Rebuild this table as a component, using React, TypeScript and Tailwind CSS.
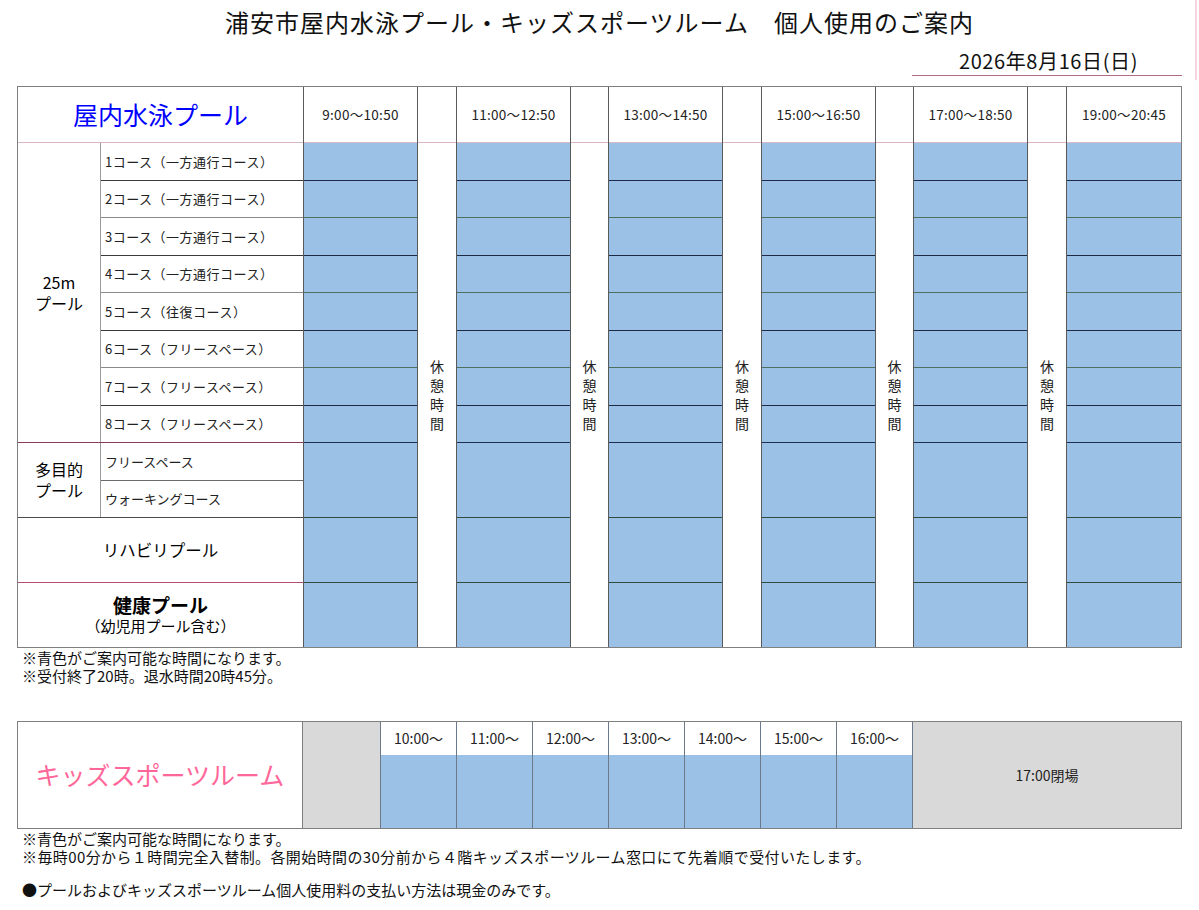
import React from "react";

const FONT = { fontFamily: '"Noto Sans CJK JP", "Noto Sans", sans-serif' };

const slots = ["9:00～10:50", "11:00～12:50", "13:00～14:50", "15:00～16:50", "17:00～18:50", "19:00～20:45"];

const courses = [
  "1コース（一方通行コース）",
  "2コース（一方通行コース）",
  "3コース（一方通行コース）",
  "4コース（一方通行コース）",
  "5コース（往復コース）",
  "6コース（フリースペース）",
  "7コース（フリースペース）",
  "8コース（フリースペース）",
];

const kidsSlots = ["10:00～", "11:00～", "12:00～", "13:00～", "14:00～", "15:00～", "16:00～"];

function SlotColumn({ label, last }: { label: string; last?: boolean }) {
  return (
    <div className={`flex w-[115px] flex-col border-l border-[#5a5a5a] ${last ? "" : "border-r"}`}>
      <div className="flex h-[56px] items-center justify-center border-b border-[#d8b8c4] bg-white text-[13.5px] tracking-[0.3px] text-[#222]">
        {label}
      </div>
      {courses.map((c, i) => (
        <div
          key={c}
          className={`h-[37.5px] bg-[#9bc2e6] ${i === 7 ? "border-b border-[#1f2f4f]" : i % 2 === 0 ? "border-b border-[#1f2a44]" : "border-b border-[#4f7060]"}`}
        />
      ))}
      <div className="h-[75px] border-b border-[#2f4a3f] bg-[#9bc2e6]" />
      <div className="h-[65px] border-b border-[#2f4a3f] bg-[#9bc2e6]" />
      <div className="h-[64px] bg-[#9bc2e6]" />
    </div>
  );
}

function BreakColumn({ w }: { w: string }) {
  return (
    <div className={`flex flex-col ${w}`}>
      <div className="h-[56px] border-b border-[#d8b8c4]" />
      <div className="flex flex-1 flex-col items-center justify-center text-[14px] leading-[19px] text-[#222]">
        <span>休</span>
        <span>憩</span>
        <span>時</span>
        <span>間</span>
      </div>
    </div>
  );
}

export default function App() {
  return (
    <div className="relative h-[910px] w-[1199px] bg-white text-black" style={FONT}>
      <div className="absolute right-[2px] top-0 h-[80px] w-[2px] bg-[#f3d6df]" />
      <div className="pt-[6px] text-center text-[24px] leading-[32px] tracking-[1px] text-[#111]">
        浦安市屋内水泳プール・キッズスポーツルーム　個人使用のご案内
      </div>
      <div className="flex justify-end pr-[17px] pt-[10px]">
        <div className="w-[270px] border-b border-[#b06a86] pb-[1px] pr-[44px] text-right text-[20px] leading-[26px] tracking-[0.6px] text-[#111]">
          2026年8月16日(日)
        </div>
      </div>

      {/* Pool table */}
      <div className="ml-[17px] mt-[10px] flex w-[1165px] border border-[#7f7f7f]">
        <div className="flex w-[285px] flex-col">
          <div className="flex h-[56px] items-center justify-center border-b border-[#d8b8c4] text-[25px] text-[#0000ff]">
            屋内水泳プール
          </div>
          <div className="flex h-[300px] border-b border-[#8a3c5c]">
            <div className="flex w-[83px] flex-col items-center justify-center border-r border-[#9a9a9a] text-[16px] leading-[21px]">
              <span>25m</span>
              <span>プール</span>
            </div>
            <div className="flex flex-1 flex-col">
              {courses.map((c, i) => (
                <div
                  key={c}
                  className={`flex flex-1 items-center pl-[4px] text-[13px] tracking-[0.5px] text-[#222] ${i < 7 ? (i % 2 === 0 ? "border-b border-[#3a3a3a]" : "border-b border-[#8a8a8a]") : ""}`}
                >
                  {c}
                </div>
              ))}
            </div>
          </div>
          <div className="flex h-[75px] border-b border-[#4a4a4a]">
            <div className="flex w-[83px] flex-col items-center justify-center border-r border-[#9a9a9a] text-[16px] leading-[21px]">
              <span>多目的</span>
              <span>プール</span>
            </div>
            <div className="flex flex-1 flex-col">
              <div className="flex flex-1 items-center border-b border-[#6a6a6a] pl-[4px] text-[13px] text-[#222]">フリースペース</div>
              <div className="flex flex-1 items-center pl-[4px] text-[13px] text-[#222]">ウォーキングコース</div>
            </div>
          </div>
          <div className="flex h-[65px] items-center justify-center border-b border-[#b05070] text-[16.5px]">
            リハビリプール
          </div>
          <div className="flex h-[64px] flex-col items-center justify-center">
            <span className="text-[19px] font-bold leading-[22px]">健康プール</span>
            <span className="text-[15px] leading-[20px]">（幼児用プール含む）</span>
          </div>
        </div>
        <SlotColumn label={slots[0]} />
        <BreakColumn w="w-[38px]" />
        <SlotColumn label={slots[1]} />
        <BreakColumn w="w-[37px]" />
        <SlotColumn label={slots[2]} />
        <BreakColumn w="w-[38px]" />
        <SlotColumn label={slots[3]} />
        <BreakColumn w="w-[37px]" />
        <SlotColumn label={slots[4]} />
        <BreakColumn w="w-[38px]" />
        <SlotColumn label={slots[5]} last />
      </div>
      <div className="ml-[22px] mt-[1px] text-[15px] leading-[18px] text-[#111]">
        <div>※青色がご案内可能な時間になります。</div>
        <div>※受付終了20時。退水時間20時45分。</div>
      </div>

      {/* Kids table */}
      <div className="ml-[17px] mt-[36px] flex h-[108px] w-[1165px] border border-[#7f7f7f]">
        <div className="flex w-[285px] items-center justify-center border-r border-[#7f7f7f] text-[25px] text-[#ff6699]">
          キッズスポーツルーム
        </div>
        <div className="w-[77px] bg-[#d9d9d9]" />
        {kidsSlots.map((s) => (
          <div key={s} className="flex w-[76px] flex-col border-l border-[#6a7a8a]">
            <div className="flex h-[33px] items-center justify-center bg-white text-[14px] text-[#222]">{s}</div>
            <div className="flex-1 bg-[#9bc2e6]" />
          </div>
        ))}
        <div className="flex flex-1 items-center justify-center border-l border-[#6a7a8a] bg-[#d9d9d9] text-[14px] text-[#222]">
          17:00閉場
        </div>
      </div>
      <div className="ml-[22px] mt-[1px] text-[15px] leading-[18px] text-[#111]">
        <div>※青色がご案内可能な時間になります。</div>
        <div className="tracking-[0.4px]">※毎時00分から１時間完全入替制。各開始時間の30分前から４階キッズスポーツルーム窓口にて先着順で受付いたします。</div>
        <div className="mt-[15px]">●プールおよびキッズスポーツルーム個人使用料の支払い方法は現金のみです。</div>
      </div>
    </div>
  );
}
